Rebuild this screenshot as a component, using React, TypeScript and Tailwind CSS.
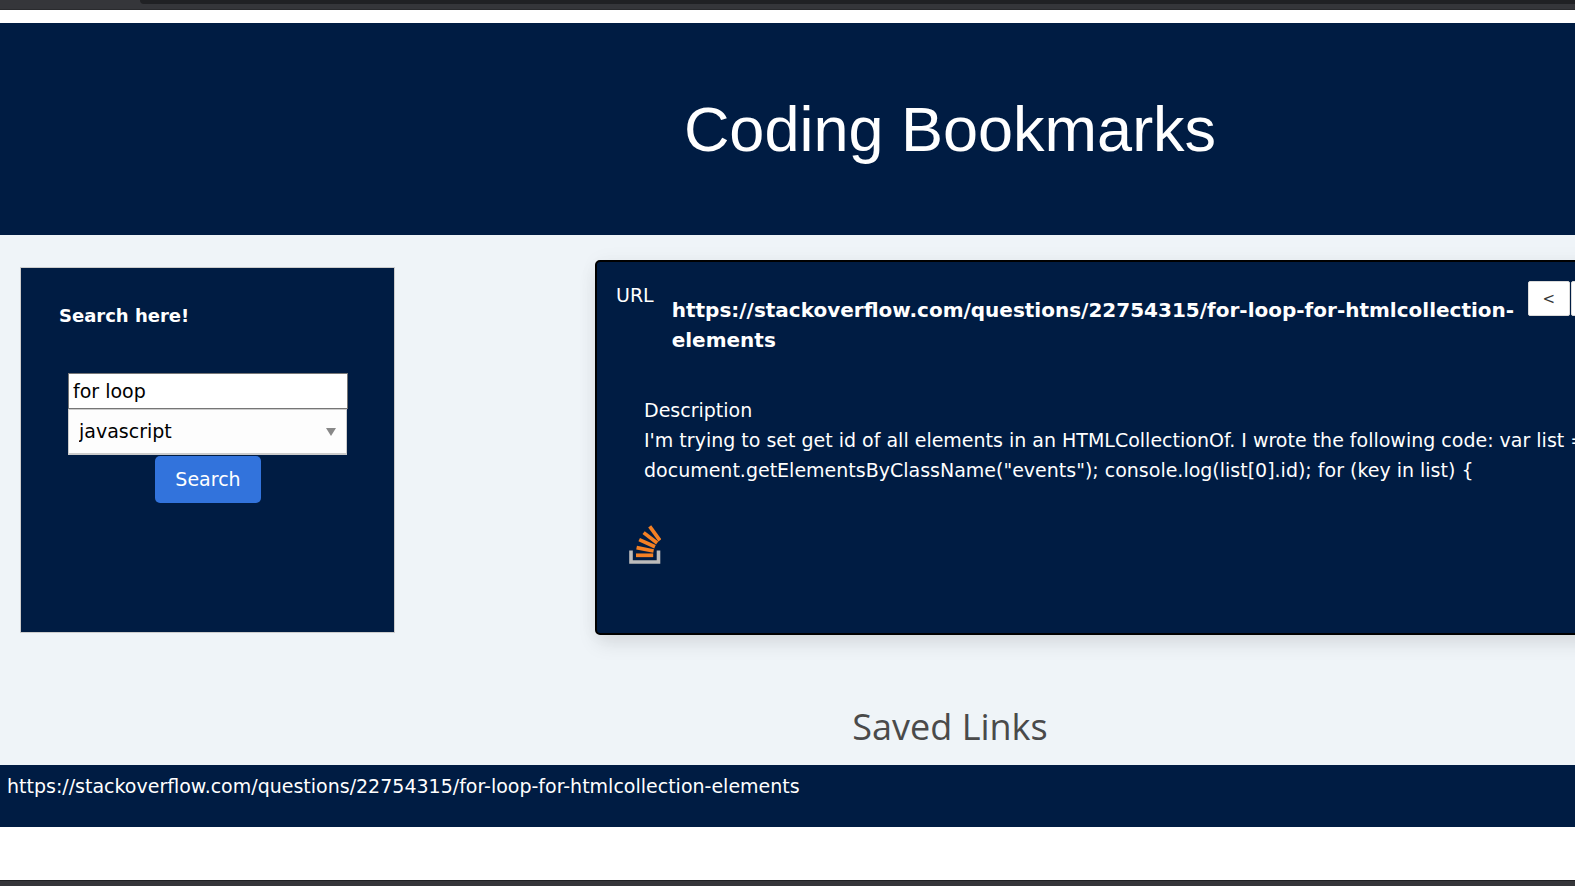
import React, { useState } from 'react';

const LINK = 'https://stackoverflow.com/questions/22754315/for-loop-for-htmlcollection-elements';

function StackOverflowIcon() {
  return (
    <svg className="h-[40px] w-[32px]" viewBox="0 0 32 40" fill="none" aria-hidden="true">
      <path d="M2 25.5V37H29.5V25.5" stroke="#bcbbbb" strokeWidth="3.6" />
      <g stroke="#f48024" strokeWidth="3.7">
        <path d="M7 30.3H24.2" />
        <path d="M7.6 22.6L24.6 26" />
        <path d="M10.2 14.6L26 21.7" />
        <path d="M14.6 7.6L28.2 18" />
        <path d="M20.7 1.4L30.9 15.3" />
      </g>
    </svg>
  );
}

function SearchPanel() {
  const [term, setTerm] = useState('for loop');
  const [language, setLanguage] = useState('javascript');
  return (
    <form
      className="mt-[7px] ml-5 flex h-[366px] w-[375px] flex-col border border-[#cccccc] bg-[#001c43] pt-[33px]"
      onSubmit={(e) => e.preventDefault()}
    >
      <h2 className="pl-[38px] text-[18px] leading-[30px] font-bold text-white">Search here!</h2>
      <div className="mt-[42px] ml-[47px] flex w-[280px] flex-col">
        <input
          type="text"
          aria-label="Search term"
          className="h-[36px] border border-[#767676] bg-white px-1 text-[19px] text-black outline-none"
          value={term}
          onChange={(e) => setTerm(e.target.value)}
        />
        <div className="relative w-[279px]">
          <select
            aria-label="Language"
            className="block h-[46px] w-full appearance-none border border-b-2 border-[#cccccc] bg-[#fdfdfd] px-[10px] text-[19px] text-black outline-none"
            value={language}
            onChange={(e) => setLanguage(e.target.value)}
          >
            <option value="javascript">javascript</option>
          </select>
          <svg
            className="pointer-events-none absolute top-[19px] right-[11px] h-2 w-[10px]"
            viewBox="0 0 10 8"
            aria-hidden="true"
          >
            <path d="M0 0H10L5 8Z" fill="#888888" />
          </svg>
        </div>
        <button
          type="submit"
          className="mt-px h-[47px] w-[106px] self-center rounded-[5px] bg-[#3273dc] text-[19px] text-white"
        >
          Search
        </button>
      </div>
    </form>
  );
}

function ResultCard() {
  return (
    <article className="h-[375px] grow rounded-[5px] border-2 border-black bg-[#001c43] px-[19px] pt-[18px] text-[19px] leading-[30px] text-white shadow-[0_10px_20px_-2px_rgba(10,10,10,0.1),0_0_20px_0_rgba(10,10,10,0.04)]">
      <div className="flex items-start">
        <span className="shrink-0 pr-[18px]">URL</span>
        <a href={LINK} className="mt-[15px] block w-[850px] text-[20px] font-bold">
          {LINK}
        </a>
        <div className="mt-px ml-[6px] flex shrink-0 gap-px text-[15px] leading-5 text-[#363636]">
          <button type="button" aria-label="Previous" className="h-[35px] w-[42px] rounded-[2px] border border-[#dbdbdb] bg-white">
            &lt;
          </button>
          <button type="button" aria-label="Next" className="h-[35px] w-[42px] rounded-[2px] border border-[#dbdbdb] bg-white">
            &gt;
          </button>
        </div>
      </div>
      <div className="mt-[40px] pl-7">
        <p>Description</p>
        <p className="w-[1000px]">
          I'm trying to set get id of all elements in an HTMLCollectionOf. I wrote the following code: var list =
          document.getElementsByClassName("events"); console.log(list[0].id); for (key in list) {'{'}
        </p>
      </div>
      <div className="mt-[40px] pl-[13px]">
        <StackOverflowIcon />
      </div>
    </article>
  );
}

export default function App() {
  return (
    <div className="overflow-hidden bg-white font-['DejaVu_Sans',sans-serif]">
      <div className="h-[10px] border-b border-[#2a2b2e] bg-[#35363a] pl-[140px]">
        <div className="h-1 rounded-bl-[10px] bg-[#202124]" />
      </div>
      <div className="min-w-[1900px] pt-[13px]">
        <header className="bg-[#001c43] py-[66px] text-center">
          <h1 className="font-['Liberation_Sans',sans-serif] text-[63px] leading-[80px] text-white">Coding Bookmarks</h1>
        </header>
        <main className="bg-[#eff4f8]">
          <div className="flex items-start gap-[200px] pt-[25px] pr-5">
            <SearchPanel />
            <ResultCard />
          </div>
          <h2 className="pt-[67px] pb-[13px] text-center font-['Open_Sans',sans-serif] text-[36px] leading-[50px] font-normal text-[#4a4a4a]">
            Saved Links
          </h2>
        </main>
        <section className="bg-[#001c43] px-[7px] pt-[6px] pb-[26px] text-[19px] leading-[30px] text-white">
          <a href={LINK}>{LINK}</a>
        </section>
      </div>
      <div className="mt-[53px] h-[6px] border-t border-[#202124] bg-[#35363a]" />
    </div>
  );
}
